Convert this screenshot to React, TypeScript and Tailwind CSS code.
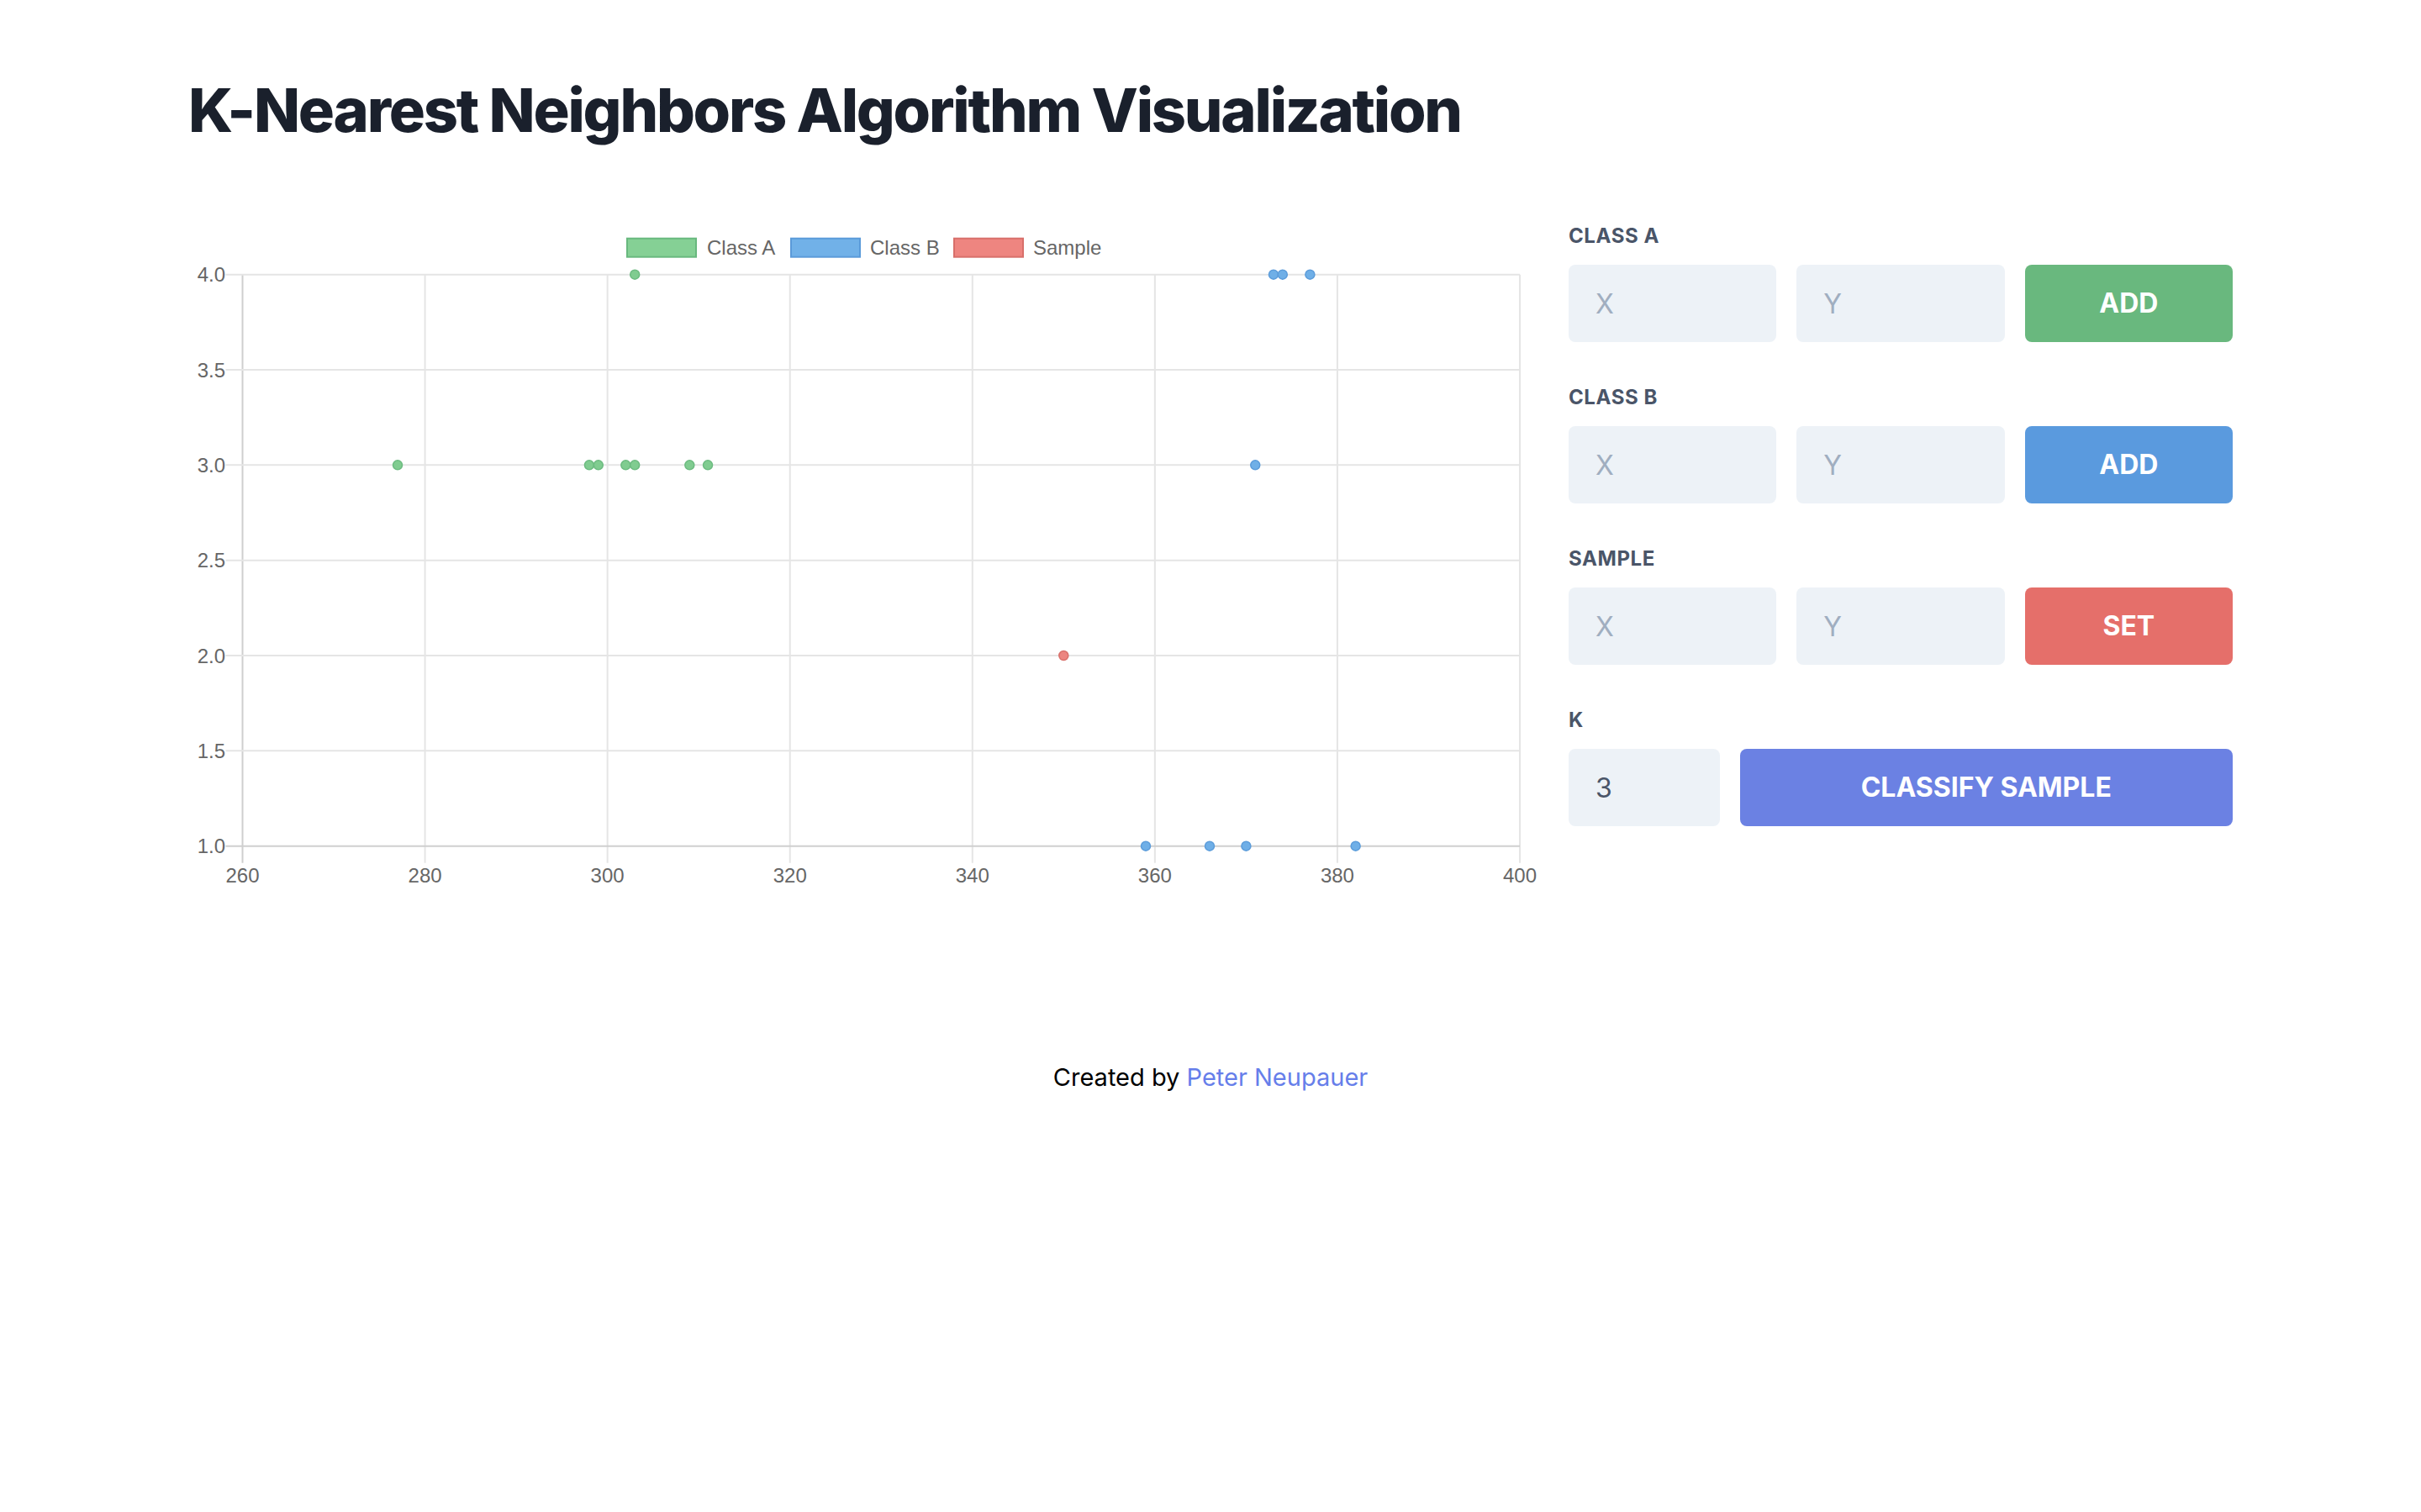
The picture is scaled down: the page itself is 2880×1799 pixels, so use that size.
import React from "react";

type Pt = [number, number];

const classA: Pt[] = [
  [303, 4],
  [277, 3],
  [298, 3],
  [299, 3],
  [302, 3],
  [303, 3],
  [309, 3],
  [311, 3],
];
const classB: Pt[] = [
  [373, 4],
  [374, 4],
  [377, 4],
  [371, 3],
  [359, 1],
  [366, 1],
  [370, 1],
  [382, 1],
];
const sample: Pt[] = [[350, 2]];

const W = 1610;
const H = 820;
const X0 = 64.5;
const X1 = 1584;
const Y0 = 63.7;
const Y1 = 743.7;

const xs = (v: number) => X0 + ((v - 260) / 140) * (X1 - X0);
const ys = (v: number) => Y1 - ((v - 1) / 3) * (Y1 - Y0);

const xTicks = [260, 280, 300, 320, 340, 360, 380, 400];
const yTicks = [1, 1.5, 2, 2.5, 3, 3.5, 4];

const font = "'Liberation Sans', Arial, sans-serif";

const Chart = () => {
  const legend = [
    { label: "Class A", box: 522, text: 617, fill: "#85d095", stroke: "#68b87e" },
    { label: "Class B", box: 717, text: 811, fill: "#71b1e8", stroke: "#5a9ad9" },
    { label: "Sample", box: 911, text: 1005, fill: "#ee8580", stroke: "#d86f6a" },
  ];

  return (
    <svg width={W} height={H} viewBox={`0 0 ${W} ${H}`} className="block">
      {/* legend */}
      {legend.map((l) => (
        <g key={l.label}>
          <rect x={l.box} y={20.7} width={82} height={22} fill={l.fill} stroke={l.stroke} strokeWidth={2} />
          <text x={l.text} y={31.7} fontSize={24} fill="#666" fontFamily={font} dominantBaseline="central">
            {l.label}
          </text>
        </g>
      ))}

      {/* vertical grid */}
      {xTicks.map((t, i) => (
        <line
          key={`vx${t}`}
          x1={xs(t)}
          x2={xs(t)}
          y1={Y0}
          y2={Y1 + 20}
          stroke={i === 0 ? "#cfcfcf" : "#e5e5e5"}
          strokeWidth={2}
        />
      ))}
      {/* horizontal grid */}
      {yTicks.map((t, i) => (
        <line
          key={`hy${t}`}
          x1={X0 - 20}
          x2={X1}
          y1={ys(t)}
          y2={ys(t)}
          stroke={i === 0 ? "#cfcfcf" : "#e5e5e5"}
          strokeWidth={2}
        />
      ))}

      {/* y labels */}
      {yTicks.map((t) => (
        <text
          key={`yl${t}`}
          x={44}
          y={ys(t)}
          fontSize={24}
          fill="#666"
          fontFamily={font}
          textAnchor="end"
          dominantBaseline="central"
        >
          {t.toFixed(1)}
        </text>
      ))}
      {/* x labels */}
      {xTicks.map((t) => (
        <text
          key={`xl${t}`}
          x={xs(t)}
          y={778.7}
          fontSize={24}
          fill="#666"
          fontFamily={font}
          textAnchor="middle"
          dominantBaseline="central"
        >
          {t}
        </text>
      ))}

      {/* points */}
      {classA.map(([x, y], i) => (
        <circle key={`a${i}`} cx={xs(x)} cy={ys(y)} r={5.5} fill="#80cc90" stroke="#6cbb80" strokeWidth={1.5} />
      ))}
      {classB.map(([x, y], i) => (
        <circle key={`b${i}`} cx={xs(x)} cy={ys(y)} r={5.5} fill="#6fafe7" stroke="#5c9cda" strokeWidth={1.5} />
      ))}
      {sample.map(([x, y], i) => (
        <circle key={`s${i}`} cx={xs(x)} cy={ys(y)} r={5.5} fill="#ec8580" stroke="#d9706b" strokeWidth={1.5} />
      ))}
    </svg>
  );
};

const Field = ({ placeholder, value }: { placeholder?: string; value?: string }) => (
  <input
    type="text"
    placeholder={placeholder}
    defaultValue={value}
    className="w-full h-[92px] rounded-[8px] bg-[#edf2f7] px-[32px] text-[32px] text-[#4a5568] placeholder:text-[#a0aec0] outline-none"
  />
);

const Label = ({ children }: { children: React.ReactNode }) => (
  <div className="text-[24px] leading-[36px] font-bold tracking-wide uppercase text-[#4a5568] mb-[16px]">{children}</div>
);

const PointRow = ({ label, action, color }: { label: string; action: string; color: string }) => (
  <div className="mb-[48px]">
    <Label>{label}</Label>
    <div className="grid grid-cols-3 gap-[24px]">
      <Field placeholder="X" />
      <Field placeholder="Y" />
      <button className={`h-[92px] rounded-[8px] text-white text-[32px] font-bold uppercase ${color}`}>{action}</button>
    </div>
  </div>
);

export default function App() {
  return (
    <div className="min-h-screen bg-white font-['Inter',sans-serif]">
      <div className="mx-auto w-[2432px] pt-[91px]">
        <h1 className="text-[72px] leading-[80px] font-extrabold tracking-[-0.031em] text-[#1a202c]">
          K-Nearest Neighbors Algorithm Visualization
        </h1>

        <div className="mt-[92px] flex gap-[32px]">
          <div className="w-[1610px] shrink-0">
            <Chart />
          </div>

          <div className="w-[790px] shrink-0">
            <PointRow label="Class A" action="Add" color="bg-[#69b87e]" />
            <PointRow label="Class B" action="Add" color="bg-[#5a9ade]" />
            <PointRow label="Sample" action="Set" color="bg-[#e56f6a]" />
            <div>
              <Label>K</Label>
              <div className="grid grid-cols-4 gap-[24px]">
                <Field value="3" />
                <button className="col-span-3 h-[92px] rounded-[8px] bg-[#6b81e3] text-white text-[32px] font-bold uppercase">
                  Classify Sample
                </button>
              </div>
            </div>
          </div>
        </div>

        <div className="mt-[175px] text-center text-[29px] leading-[48px] text-black">
          Created by <a className="text-[#667eea]">Peter Neupauer</a>
        </div>
      </div>
    </div>
  );
}
